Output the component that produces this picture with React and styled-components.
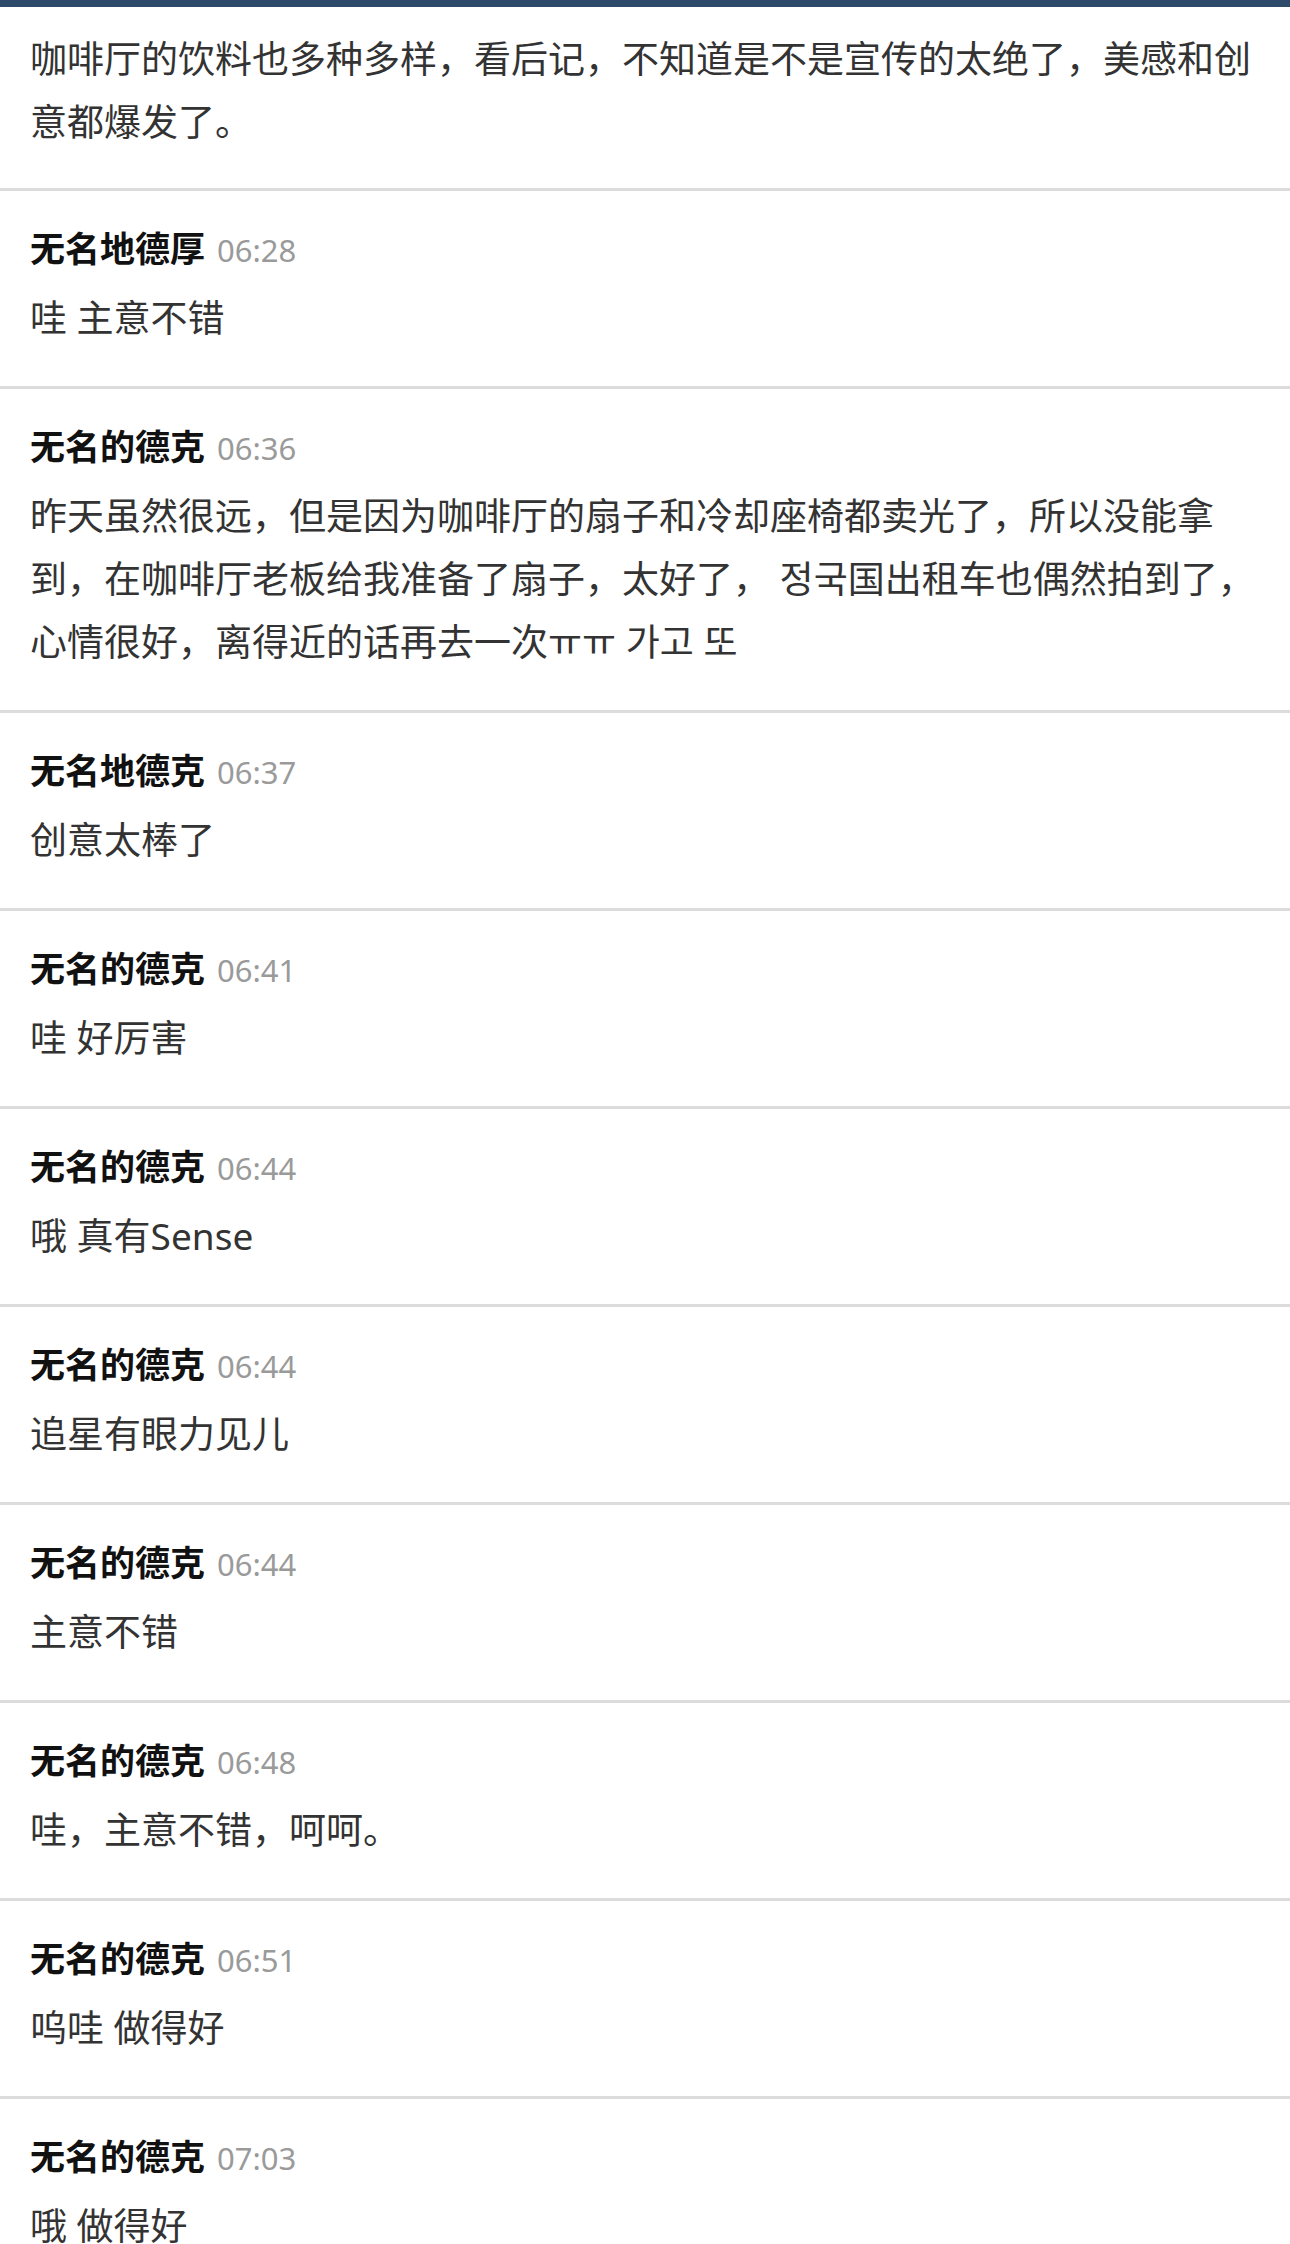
import React from "react";
import styled, { createGlobalStyle } from "styled-components";

const GlobalStyle = createGlobalStyle`
  html, body {
    margin: 0;
    padding: 0;
    background: #fff;
  }
  body {
    font-family: "Noto Sans", "Noto Sans CJK SC", sans-serif;
  }
`;

const comments = [
  { name: "无名地德厚", time: "06:28", text: "哇 主意不错" },
  {
    name: "无名的德克",
    time: "06:36",
    text: "昨天虽然很远，但是因为咖啡厅的扇子和冷却座椅都卖光了，所以没能拿到，在咖啡厅老板给我准备了扇子，太好了， 정국国出租车也偶然拍到了，心情很好，离得近的话再去一次ㅠㅠ 가고 또",
  },
  { name: "无名地德克", time: "06:37", text: "创意太棒了" },
  { name: "无名的德克", time: "06:41", text: "哇 好厉害" },
  { name: "无名的德克", time: "06:44", text: "哦 真有Sense" },
  { name: "无名的德克", time: "06:44", text: "追星有眼力见儿" },
  { name: "无名的德克", time: "06:44", text: "主意不错" },
  { name: "无名的德克", time: "06:48", text: "哇，主意不错，呵呵。" },
  { name: "无名的德克", time: "06:51", text: "呜哇 做得好" },
  { name: "无名的德克", time: "07:03", text: "哦 做得好" },
];

const Page = styled.div`
  width: 1290px;
  min-height: 2244px;
  border-top: 7px solid #2e4a6b;
  box-sizing: border-box;
`;

const Item = styled.div`
  padding: ${(p) => (p.$lead ? "20px 30px 35px" : "33px 30px 37px")};
  border-bottom: 3px solid #dcdcdc;
`;

const Header = styled.div`
  display: flex;
  align-items: baseline;
  gap: 12px;
  height: 50px;
  line-height: 50px;
  margin-bottom: 12px;
`;

const Name = styled.span`
  font-size: 35px;
  font-weight: 700;
  color: #111;
`;

const Time = styled.span`
  font-size: 31px;
  color: #9a9a9a;
`;

const Body = styled.div`
  font-size: 37px;
  line-height: 63px;
  color: #333;
`;

export default function App() {
  return (
    <Page>
      <GlobalStyle />
      <Item $lead>
        <Body>
          咖啡厅的饮料也多种多样，看后记，不知道是不是宣传的太绝了，美感和创意都爆发了。
        </Body>
      </Item>
      {comments.map((c, i) => (
        <Item key={i}>
          <Header>
            <Name>{c.name}</Name>
            <Time>{c.time}</Time>
          </Header>
          <Body>{c.text}</Body>
        </Item>
      ))}
    </Page>
  );
}
